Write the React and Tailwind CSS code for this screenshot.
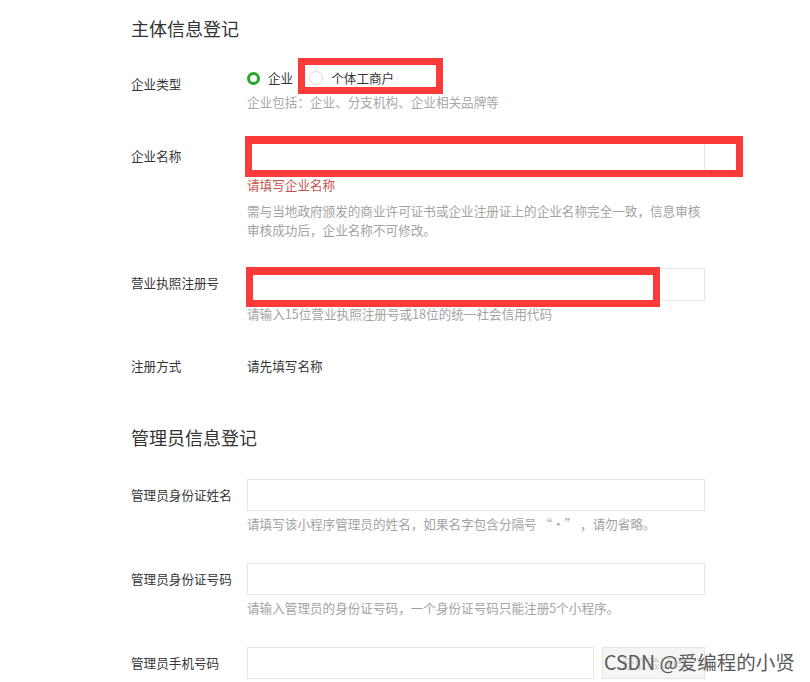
export default function App() {
  const font = { fontFamily: '"Noto Sans CJK SC", "Noto Sans", sans-serif' };

  return (
    <div
      className="relative w-[810px] h-[682px] overflow-hidden bg-white pl-[131px] text-[12.6px] text-[#353535]"
      style={font}
    >
      {/* 主体信息 */}
      <h2 className="mt-[16px] h-[24px] text-[18px] leading-[24px] font-normal text-[#333]">
        主体信息登记
      </h2>

      {/* 企业类型 */}
      <div className="relative mt-[28px] flex items-start">
        <div className="w-[116px] mt-[6px] h-[20px] leading-[20px]">企业类型</div>
        <div>
          <div className="flex h-[20px] items-center">
            <span className="h-[13px] w-[13px] rounded-full border-[3.5px] border-[#27a52a] bg-white"></span>
            <span className="ml-[8px] leading-[20px]">企业</span>
            <span className="ml-[16px] h-[14px] w-[14px] rounded-full border border-[#dcdcdc] bg-white"></span>
            <span className="ml-[8px] leading-[20px]">个体工商户</span>
          </div>
          <div className="mt-[5px] h-[18px] leading-[18px] text-[#a8a8a8]">
            企业包括：企业、分支机构、企业相关品牌等
          </div>
        </div>
        {/* annotation */}
        <div className="absolute left-[167px] top-[-10px] h-[36px] w-[145px] border-[7px] border-[#fb3a3a]"></div>
      </div>

      {/* 企业名称 */}
      <div className="relative mt-[29px] flex items-start">
        <div className="w-[116px] mt-[6px] h-[20px] leading-[20px]">企业名称</div>
        <div>
          <div className="h-[33px] w-[458px] border border-[#e7e7e7] bg-white"></div>
          <div className="mt-[3px] h-[18px] leading-[18px] text-[#c4534f]">请填写企业名称</div>
          <div className="mt-[7px] w-[462px] leading-[19px] text-[#a3a3a3]">
            需与当地政府颁发的商业许可证书或企业注册证上的企业名称完全一致，信息审核
            <br />
            审核成功后，企业名称不可修改。
          </div>
        </div>
        <div className="absolute left-[114px] top-[-4px] h-[41px] w-[498px] border-[7px] border-t-[8px] border-[#fb3a3a]"></div>
      </div>

      {/* 营业执照注册号 */}
      <div className="relative mt-[29px] flex items-start">
        <div className="w-[116px] mt-[5px] h-[20px] leading-[20px]">营业执照注册号</div>
        <div>
          <div className="h-[33px] w-[458px] border border-[#e7e7e7] bg-white"></div>
          <div className="mt-[4px] h-[18px] leading-[18px] text-[#a3a3a3]">
            请输入15位营业执照注册号或18位的统一社会信用代码
          </div>
        </div>
        <div className="absolute left-[115px] top-[-1px] h-[40px] w-[414px] border-[7px] border-t-[8px] border-[#fb3a3a]"></div>
      </div>

      {/* 注册方式 */}
      <div className="mt-[33px] flex h-[20px] items-center leading-[20px]">
        <div className="w-[116px]">注册方式</div>
        <div>请先填写名称</div>
      </div>

      {/* 管理员信息 */}
      <h2 className="mt-[49px] h-[24px] text-[18px] leading-[24px] font-normal text-[#333]">
        管理员信息登记
      </h2>

      <div className="mt-[30px] flex items-start">
        <div className="w-[116px] mt-[6px] h-[20px] leading-[20px]">管理员身份证姓名</div>
        <div>
          <div className="h-[32px] w-[458px] border border-[#e7e7e7] bg-white"></div>
          <div className="mt-[4px] h-[18px] leading-[18px] text-[#a3a3a3]">
            请填写该小程序管理员的姓名，如果名字包含分隔号 “·” ，请勿省略。
          </div>
        </div>
      </div>

      <div className="mt-[30px] flex items-start">
        <div className="w-[116px] mt-[6px] h-[20px] leading-[20px]">管理员身份证号码</div>
        <div>
          <div className="h-[32px] w-[458px] border border-[#e7e7e7] bg-white"></div>
          <div className="mt-[4px] h-[18px] leading-[18px] text-[#a3a3a3]">
            请输入管理员的身份证号码，一个身份证号码只能注册5个小程序。
          </div>
        </div>
      </div>

      <div className="mt-[30px] flex items-start">
        <div className="w-[116px] mt-[6px] h-[20px] leading-[20px]">管理员手机号码</div>
        <div className="flex gap-[8px]">
          <div className="h-[32px] w-[347px] border border-[#e7e7e7] bg-white"></div>
          <div className="flex h-[32px] w-[103px] items-center justify-center border border-[#e4e4e4] bg-[#f5f5f5] text-[#d0d0d0]">
            获取验证码
          </div>
        </div>
      </div>

      {/* watermark */}
      <div className="absolute left-[604px] top-[650px] text-[19.5px] leading-[24px] text-[#5a5a5a]">
        CSDN @爱编程的小贤
      </div>
    </div>
  );
}
